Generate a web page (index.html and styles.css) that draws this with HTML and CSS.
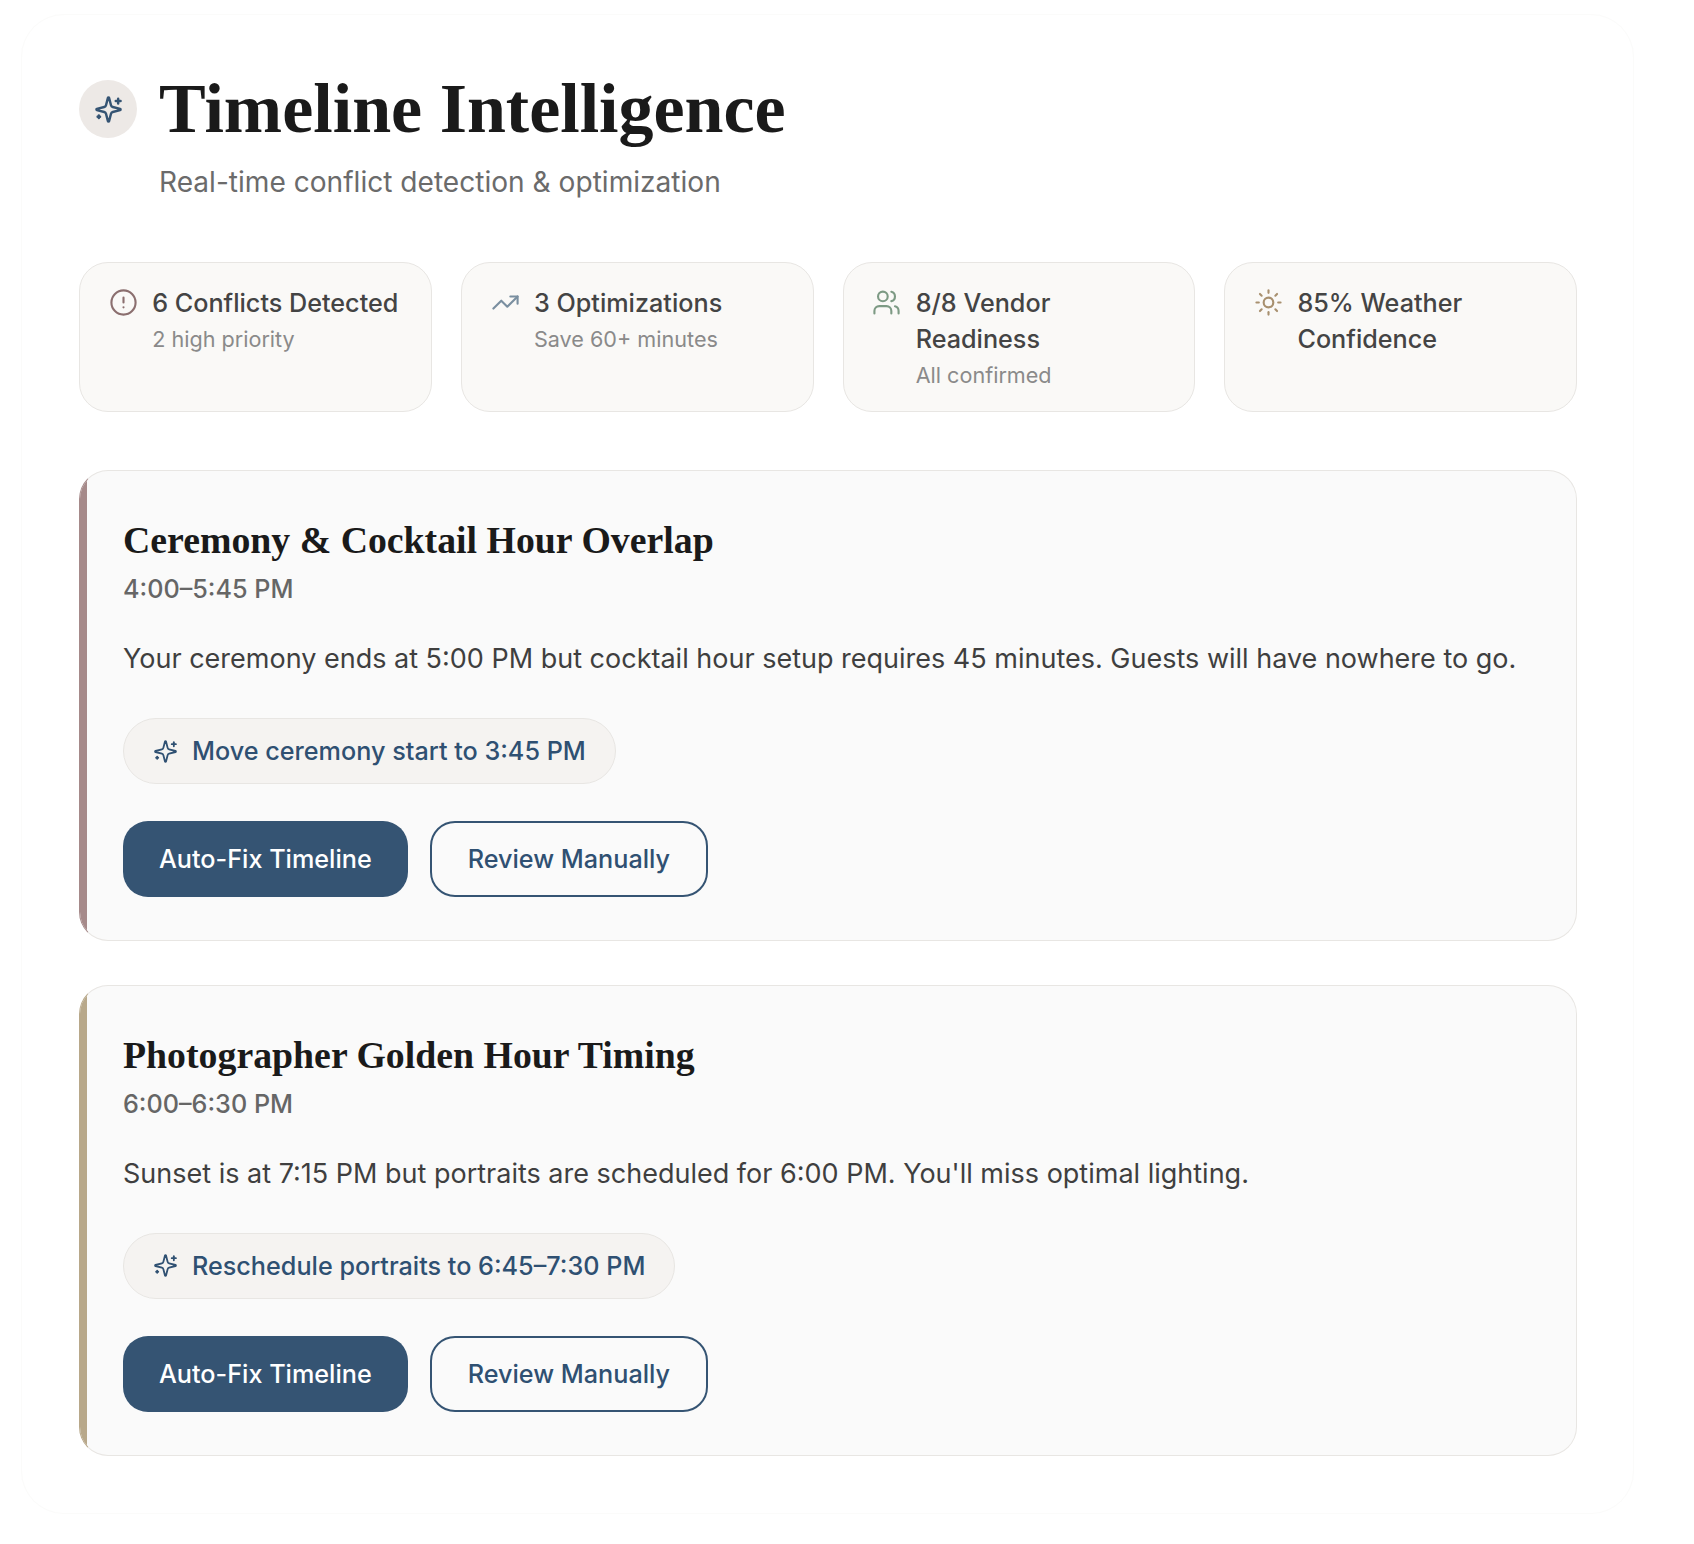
FILE: index.html
```html
<!DOCTYPE html>
<html lang="en">
<head>
    <meta charset="UTF-8">
    <meta name="viewport" content="width=device-width, initial-scale=1.0">
    <title>Timeline Intelligence</title>
    <link rel="stylesheet" href="styles.css">
</head>
<body>
    <div class="panel">
        <header class="header">
            <div class="header-top">
                <div class="header-icon">
                    <svg class="icon-header" viewBox="0 0 24 24"><path d="M9.937 15.5A2 2 0 0 0 8.5 14.063l-6.135-1.582a.5.5 0 0 1 0-.962L8.5 9.936A2 2 0 0 0 9.937 8.5l1.582-6.135a.5.5 0 0 1 .963 0L14.063 8.5A2 2 0 0 0 15.5 9.937l6.135 1.581a.5.5 0 0 1 0 .964L15.5 14.063a2 2 0 0 0-1.437 1.437l-1.582 6.135a.5.5 0 0 1-.963 0z"/><path d="M20 3v4"/><path d="M22 5h-4"/><path d="M4 17v2"/><path d="M5 18H3"/></svg>
                </div>
                <h1>Timeline Intelligence</h1>
            </div>
            <p class="subtitle">Real-time conflict detection &amp; optimization</p>
        </header>

        <div class="stats">
            <div class="stat">
                <svg class="stat-icon conflict" viewBox="0 0 24 24"><circle cx="12" cy="12" r="10"/><line x1="12" y1="8" x2="12" y2="12"/><line x1="12" y1="16" x2="12.01" y2="16"/></svg>
                <div>
                    <div class="stat-title">6 Conflicts Detected</div>
                    <div class="stat-sub">2 high priority</div>
                </div>
            </div>
            <div class="stat">
                <svg class="stat-icon optimize" viewBox="0 0 24 24"><polyline points="22 7 13.5 15.5 8.5 10.5 2 17"/><polyline points="16 7 22 7 22 13"/></svg>
                <div>
                    <div class="stat-title">3 Optimizations</div>
                    <div class="stat-sub">Save 60+ minutes</div>
                </div>
            </div>
            <div class="stat">
                <svg class="stat-icon vendor" viewBox="0 0 24 24"><path d="M16 21v-2a4 4 0 0 0-4-4H6a4 4 0 0 0-4 4v2"/><circle cx="9" cy="7" r="4"/><path d="M22 21v-2a4 4 0 0 0-3-3.87"/><path d="M16 3.13a4 4 0 0 1 0 7.75"/></svg>
                <div>
                    <div class="stat-title">8/8 Vendor Readiness</div>
                    <div class="stat-sub">All confirmed</div>
                </div>
            </div>
            <div class="stat">
                <svg class="stat-icon weather" viewBox="0 0 24 24"><circle cx="12" cy="12" r="4"/><path d="M12 2v2"/><path d="M12 20v2"/><path d="m4.93 4.93 1.41 1.41"/><path d="m17.66 17.66 1.41 1.41"/><path d="M2 12h2"/><path d="M20 12h2"/><path d="m6.34 17.66-1.41 1.41"/><path d="m19.07 4.93-1.41 1.41"/></svg>
                <div>
                    <div class="stat-title">85% Weather Confidence</div>
                </div>
            </div>
        </div>

        <div class="conflicts">
            <section class="card high">
                <h2>Ceremony &amp; Cocktail Hour Overlap</h2>
                <div class="card-time">4:00–5:45 PM</div>
                <p class="card-text">Your ceremony ends at 5:00 PM but cocktail hour setup requires 45 minutes. Guests will have nowhere to go.</p>
                <div class="suggestion">
                    <svg class="icon-suggestion" viewBox="0 0 24 24"><path d="M9.937 15.5A2 2 0 0 0 8.5 14.063l-6.135-1.582a.5.5 0 0 1 0-.962L8.5 9.936A2 2 0 0 0 9.937 8.5l1.582-6.135a.5.5 0 0 1 .963 0L14.063 8.5A2 2 0 0 0 15.5 9.937l6.135 1.581a.5.5 0 0 1 0 .964L15.5 14.063a2 2 0 0 0-1.437 1.437l-1.582 6.135a.5.5 0 0 1-.963 0z"/><path d="M20 3v4"/><path d="M22 5h-4"/><path d="M4 17v2"/><path d="M5 18H3"/></svg>
                    Move ceremony start to 3:45 PM
                </div>
                <div class="actions">
                    <button class="btn primary">Auto-Fix Timeline</button>
                    <button class="btn secondary">Review Manually</button>
                </div>
            </section>

            <section class="card medium">
                <h2>Photographer Golden Hour Timing</h2>
                <div class="card-time">6:00–6:30 PM</div>
                <p class="card-text">Sunset is at 7:15 PM but portraits are scheduled for 6:00 PM. You'll miss optimal lighting.</p>
                <div class="suggestion">
                    <svg class="icon-suggestion" viewBox="0 0 24 24"><path d="M9.937 15.5A2 2 0 0 0 8.5 14.063l-6.135-1.582a.5.5 0 0 1 0-.962L8.5 9.936A2 2 0 0 0 9.937 8.5l1.582-6.135a.5.5 0 0 1 .963 0L14.063 8.5A2 2 0 0 0 15.5 9.937l6.135 1.581a.5.5 0 0 1 0 .964L15.5 14.063a2 2 0 0 0-1.437 1.437l-1.582 6.135a.5.5 0 0 1-.963 0z"/><path d="M20 3v4"/><path d="M22 5h-4"/><path d="M4 17v2"/><path d="M5 18H3"/></svg>
                    Reschedule portraits to 6:45–7:30 PM
                </div>
                <div class="actions">
                    <button class="btn primary">Auto-Fix Timeline</button>
                    <button class="btn secondary">Review Manually</button>
                </div>
            </section>
        </div>
    </div>
</body>
</html>
```

FILE: styles.css
```css
* {
    box-sizing: border-box;
}
body {
    margin: 0;
    background-color: #ffffff;
    font-family: Inter, "Liberation Sans", sans-serif;
    color: #1a1a1a;
}
svg {
    fill: none;
    stroke: currentColor;
    stroke-linecap: round;
    stroke-linejoin: round;
    flex-shrink: 0;
}
.panel {
    width: 1613px;
    margin: 14px 0 0 21px;
    padding: 65px 56px 57px 57px;
    background: #ffffff;
    border: 1px solid #fbfbfa;
    border-radius: 43px;
}
.header {
    margin-bottom: 60px;
}
.header-top {
    display: flex;
    align-items: center;
    gap: 22px;
}
.header-icon {
    width: 58px;
    height: 58px;
    border-radius: 50%;
    background-color: #ede9e6;
    color: #355473;
    display: flex;
    align-items: center;
    justify-content: center;
}
.icon-header {
    width: 29px;
    height: 29px;
    stroke-width: 2;
}
h1 {
    margin: 0;
    font-family: "Liberation Serif", serif;
    font-size: 70px;
    line-height: 58px;
    font-weight: 700;
    color: #1a1a1a;
}
.subtitle {
    margin: 24px 0 0 80px;
    font-size: 28.1px;
    line-height: 40px;
    color: #6b6b6b;
}
.stats {
    display: grid;
    grid-template-columns: repeat(4, 1fr);
    gap: 29px;
    margin-bottom: 58px;
}
.stat {
    display: flex;
    gap: 14.4px;
    padding: 22px 28.8px 18px;
    min-height: 149px;
    background-color: #faf9f7;
    border: 1px solid #e8e6e3;
    border-radius: 29px;
}
.stat-icon {
    width: 29px;
    height: 29px;
    stroke-width: 1.75;
    margin-top: 3px;
}
.conflict { color: #8b6f6f; }
.optimize { color: #7a8fa0; }
.vendor { color: #7d9a84; }
.weather { color: #a8906f; }
.stat-title {
    font-size: 25.2px;
    line-height: 36px;
    font-weight: 500;
    color: #444444;
}
.stat-sub {
    font-size: 21.6px;
    line-height: 36px;
    color: #8a8a8a;
}
.conflicts {
    display: flex;
    flex-direction: column;
    gap: 43.5px;
}
.card {
    position: relative;
    overflow: hidden;
    padding: 42px 43px 43px;
    background-color: #fafafa;
    border: 1px solid #e8e6e3;
    border-radius: 29px;
}
.card::before {
    content: "";
    position: absolute;
    left: 0;
    top: 0;
    bottom: 0;
    width: 7px;
}
.high { border-left-color: #a68a8a; }
.high::before { background-color: #a68a8a; }
.medium { border-left-color: #b8a88a; }
.medium::before { background-color: #b8a88a; }
h2 {
    margin: 0;
    font-family: "Liberation Serif", serif;
    font-size: 37.8px;
    line-height: 54px;
    font-weight: 700;
    color: #1a1a1a;
}
.card-time {
    margin-top: 4px;
    font-size: 25.2px;
    line-height: 36px;
    font-weight: 500;
    color: #666666;
}
.card-text {
    margin: 33px 0 0;
    font-size: 27px;
    line-height: 38px;
    color: #3f3f3f;
}
.suggestion {
    display: inline-flex;
    align-items: center;
    gap: 14px;
    height: 66px;
    margin-top: 40px;
    padding: 0 29px;
    background-color: #f5f3f1;
    border: 1px solid #e8e6e3;
    border-radius: 33px;
    font-size: 25.2px;
    font-weight: 500;
    color: #2f5072;
}
.icon-suggestion {
    width: 25px;
    height: 25px;
    stroke-width: 1.75;
}
.actions {
    display: flex;
    gap: 22px;
    margin-top: 37px;
}
.btn {
    height: 76px;
    padding: 0 36px;
    font-family: inherit;
    font-size: 25.2px;
    font-weight: 500;
    border-radius: 25px;
    cursor: pointer;
}
.primary {
    background-color: #355473;
    border: none;
    color: #ffffff;
}
.secondary {
    background-color: transparent;
    border: 2px solid #355473;
    color: #2f5072;
}
```
